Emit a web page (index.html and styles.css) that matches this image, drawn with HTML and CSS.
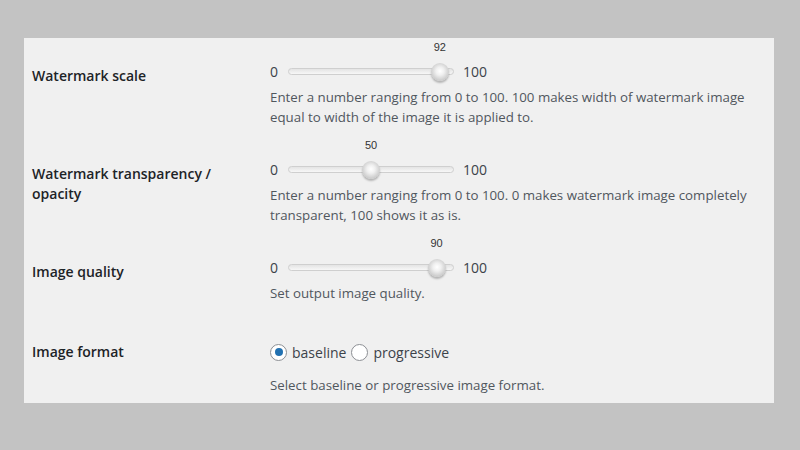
FILE: index.html
```html
<!DOCTYPE html>
<html>
<head>
<meta charset="utf-8">
<link rel="stylesheet" href="styles.css">
</head>
<body>
<div class="panel">
  <div class="row slider-row">
    <div class="label">Watermark scale</div>
    <div class="field">
      <div class="slider-line">
        <span class="min">0</span>
        <div class="track">
          <div class="thumb" style="left: 92%"><span class="val">92</span></div>
        </div>
        <span class="max">100</span>
      </div>
      <p class="desc">Enter a number ranging from 0 to 100. 100 makes width of watermark image equal to width of the image it is applied to.</p>
    </div>
  </div>
  <div class="row slider-row">
    <div class="label">Watermark transparency / opacity</div>
    <div class="field">
      <div class="slider-line">
        <span class="min">0</span>
        <div class="track">
          <div class="thumb" style="left: 50%"><span class="val">50</span></div>
        </div>
        <span class="max">100</span>
      </div>
      <p class="desc">Enter a number ranging from 0 to 100. 0 makes watermark image completely transparent, 100 shows it as is.</p>
    </div>
  </div>
  <div class="row slider-row">
    <div class="label">Image quality</div>
    <div class="field">
      <div class="slider-line">
        <span class="min">0</span>
        <div class="track">
          <div class="thumb" style="left: 90%"><span class="val">90</span></div>
        </div>
        <span class="max">100</span>
      </div>
      <p class="desc">Set output image quality.</p>
    </div>
  </div>
  <div class="row radio-row">
    <div class="label">Image format</div>
    <div class="field">
      <div class="radios">
        <label class="radio"><span class="circle checked"></span>baseline</label>
        <label class="radio"><span class="circle"></span>progressive</label>
      </div>
      <p class="desc desc-radio">Select baseline or progressive image format.</p>
    </div>
  </div>
</div>
</body>
</html>
```

FILE: styles.css
```css
html, body {
  margin: 0;
  padding: 0;
  background: #c3c3c3;
  width: 800px;
  height: 450px;
  overflow: hidden;
}
body {
  padding: 38px 26px 0 24px;
  box-sizing: border-box;
  font-family: "Open Sans", "Noto Sans", sans-serif;
}
.panel {
  background: #f0f0f0;
  width: 750px;
  height: 365px;
  box-sizing: border-box;
  padding: 0 10px 0 8px;
}
.row {
  display: grid;
  grid-template-columns: 238px 1fr;
  align-items: start;
}
.slider-row {
  padding: 23px 0 9px;
}
.radio-row {
  padding: 30px 0 0;
}
.label {
  font-size: 14px;
  font-weight: 600;
  line-height: 20px;
  color: #1d2327;
  width: 200px;
}
.slider-row .label {
  padding-top: 5px;
}
.field {
  color: #50575e;
  font-size: 13.3px;
}
.slider-line {
  display: flex;
  align-items: center;
  height: 20px;
  font-size: 14px;
  color: #3c434a;
}
.min {
  width: 18px;
}
.track {
  position: relative;
  width: 164px;
  height: 5px;
  border: 1px solid #cfcfcf;
  border-radius: 4px;
  background: linear-gradient(#e4e4e4, #f7f7f7);
  margin-right: 9px;
}
.thumb {
  position: absolute;
  top: -6px;
  width: 18px;
  height: 18px;
  margin-left: -9px;
  border-radius: 50%;
  background: radial-gradient(circle at 50% 45%, #ffffff 0%, #f0f0f0 30%, #c6c6c6 75%, #aeaeae 100%);
  box-shadow: 0 2px 2px rgba(0,0,0,0.25);
}
.val {
  position: absolute;
  left: 50%;
  bottom: 27px;
  transform: translateX(-50%);
  font-family: "Liberation Sans", Arial, sans-serif;
  font-size: 11px;
  line-height: 13px;
  color: #333;
}
.desc {
  margin: 6px 0 0;
  line-height: 20px;
  width: 490px;
}
.radios {
  display: flex;
  align-items: center;
  height: 20px;
  font-size: 14px;
  color: #3c434a;
}
.radio {
  display: flex;
  align-items: center;
  margin-right: 5px;
}
.circle {
  width: 15px;
  height: 15px;
  border: 1px solid #8c8f94;
  border-radius: 50%;
  background: #fff;
  margin-right: 5px;
  position: relative;
}
.circle.checked::after {
  content: "";
  position: absolute;
  left: 3.5px;
  top: 3.5px;
  width: 8px;
  height: 8px;
  border-radius: 50%;
  background: #2271b1;
}
.desc-radio {
  margin-top: 13px;
}
```
